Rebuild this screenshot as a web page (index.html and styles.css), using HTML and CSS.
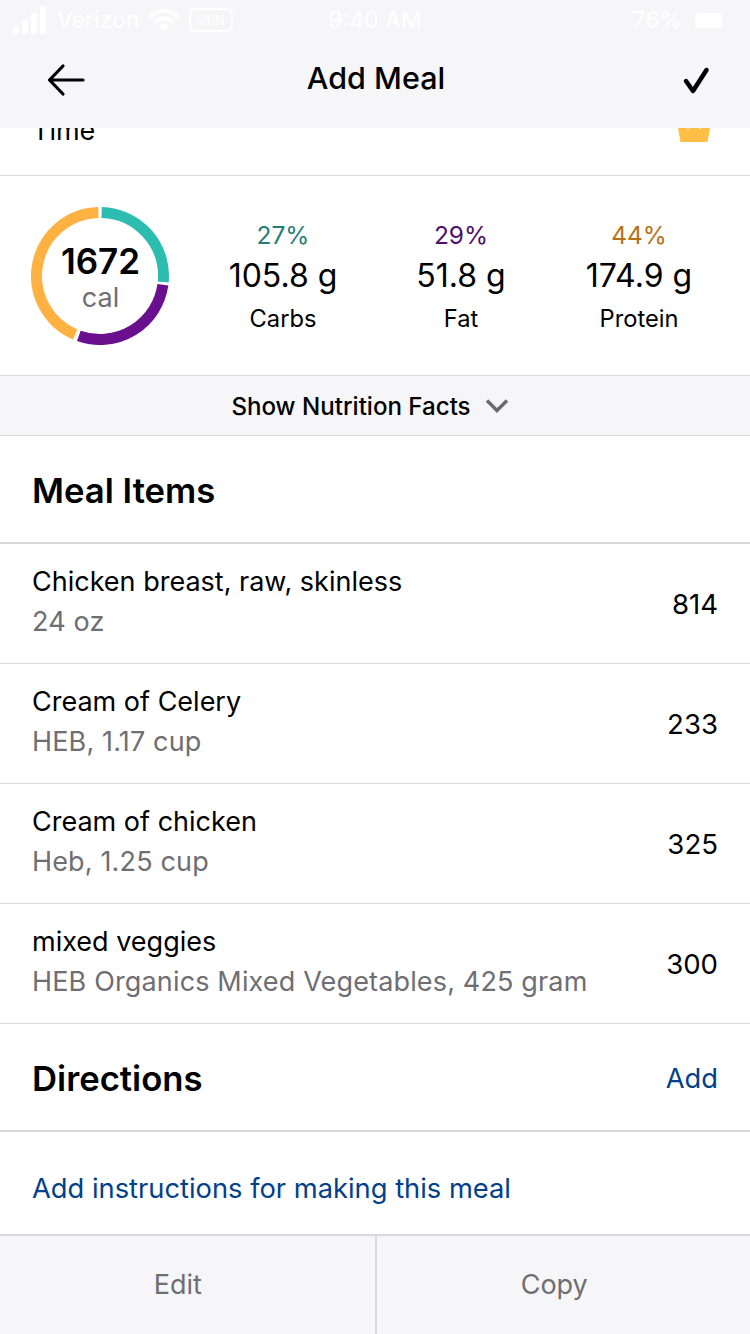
FILE: index.html
```html
<!DOCTYPE html>
<html lang="en">
<head>
    <meta charset="UTF-8">
    <meta name="viewport" content="width=device-width, initial-scale=1.0">
    <title>Add Meal</title>
    <link rel="stylesheet" href="styles.css">
</head>
<body>
    <div class="page">
        <header class="top">
            <div class="status">
                <div class="status-left">
                    <svg class="signal" width="34" height="32" viewBox="0 0 34 32">
                        <rect x="0" y="22" width="6" height="8" rx="2"/>
                        <rect x="9" y="16" width="6" height="14" rx="2"/>
                        <rect x="18" y="9" width="6" height="21" rx="2"/>
                        <rect x="27" y="2" width="6" height="28" rx="2"/>
                    </svg>
                    <span>Verizon</span>
                    <svg class="wifi" width="30" height="24" viewBox="0 0 30 24">
                        <path d="M1 9 C9 1 21 1 29 9 M6 14 C11 9 19 9 24 14" fill="none" stroke="#fff" stroke-width="4"/>
                        <path d="M10 18 C13 15 17 15 20 18 L15 23 Z" fill="#fff"/>
                    </svg>
                    <span class="vpn">VPN</span>
                </div>
                <span class="clock">9:40 AM</span>
                <div class="status-right">
                    <span>76%</span>
                    <span class="battery"></span>
                </div>
            </div>
            <nav class="nav">
                <svg class="nav-icon" width="40" height="40" viewBox="0 0 40 40">
                    <path d="M37 20 H4 M17 6 L3.500 20 L17 34" fill="none" stroke="#000" stroke-width="3.200" stroke-linecap="round" stroke-linejoin="round"/>
                </svg>
                <h1>Add Meal</h1>
                <svg class="nav-icon" width="40" height="40" viewBox="0 0 40 40">
                    <path d="M10 21 L17 31 L30.500 10" fill="none" stroke="#000" stroke-width="4.500" stroke-linecap="round" stroke-linejoin="round"/>
                </svg>
            </nav>
        </header>

        <div class="time-row">
            <span>Time</span>
            <svg width="32" height="14" viewBox="0 0 32 14">
                <path d="M0 0 H9 L10 1.500 L11 0 H21 L22 1.500 L23 0 H32 L29.500 14 H2.500 Z" fill="#ffbe45"/>
            </svg>
        </div>

        <section class="summary">
            <div class="ring">
                <svg width="140" height="140" viewBox="0 0 140 140" fill="none" stroke-width="11">
                    <path d="M71.660 6.520 A63.500 63.500 0 0 1 133.210 76.090" stroke="#2dbdb0"/>
                    <path d="M132.880 78.840 A63.500 63.500 0 0 1 48.800 129.860" stroke="#6a0f8e"/>
                    <path d="M45.190 128.450 A63.500 63.500 0 0 1 68.340 6.520" stroke="#ffb142"/>
                </svg>
                <div class="ring-text">
                    <strong>1672</strong>
                    <span>cal</span>
                </div>
            </div>
            <div class="macros">
                <div class="macro">
                    <span class="pct pct-carbs">27%</span>
                    <span class="grams">105.8 g</span>
                    <span class="macro-name">Carbs</span>
                </div>
                <div class="macro">
                    <span class="pct pct-fat">29%</span>
                    <span class="grams">51.8 g</span>
                    <span class="macro-name">Fat</span>
                </div>
                <div class="macro">
                    <span class="pct pct-protein">44%</span>
                    <span class="grams">174.9 g</span>
                    <span class="macro-name">Protein</span>
                </div>
            </div>
        </section>

        <div class="facts-toggle">
            <span>Show Nutrition Facts</span>
            <svg width="24" height="16" viewBox="0 0 24 16">
                <path d="M2 2.500 L12 12.500 L22 2.500" fill="none" stroke="#6b6b6f" stroke-width="3.500"/>
            </svg>
        </div>

        <div class="section-head">
            <h2>Meal Items</h2>
        </div>

        <div class="item">
            <div class="item-text">
                <span class="item-name">Chicken breast, raw, skinless</span>
                <span class="item-sub">24 oz</span>
            </div>
            <span class="item-cal">814</span>
        </div>
        <div class="item">
            <div class="item-text">
                <span class="item-name">Cream of Celery</span>
                <span class="item-sub">HEB, 1.17 cup</span>
            </div>
            <span class="item-cal">233</span>
        </div>
        <div class="item">
            <div class="item-text">
                <span class="item-name">Cream of chicken</span>
                <span class="item-sub">Heb, 1.25 cup</span>
            </div>
            <span class="item-cal">325</span>
        </div>
        <div class="item">
            <div class="item-text">
                <span class="item-name">mixed veggies</span>
                <span class="item-sub">HEB Organics Mixed Vegetables, 425 gram</span>
            </div>
            <span class="item-cal">300</span>
        </div>

        <div class="section-head">
            <h2>Directions</h2>
            <a class="link">Add</a>
        </div>

        <div class="instructions">
            <a class="link">Add instructions for making this meal</a>
        </div>

        <footer class="toolbar">
            <span class="tool">Edit</span>
            <span class="tool">Copy</span>
        </footer>
    </div>
</body>
</html>
```

FILE: styles.css
```css
* {
    box-sizing: border-box;
}

body {
    margin: 0;
    background: #fff;
    color: #000;
    font-family: Inter, "Liberation Sans", sans-serif;
}

.page {
    width: 750px;
    height: 1334px;
    display: flex;
    flex-direction: column;
    overflow: hidden;
}

h1, h2 {
    margin: 0;
    font-weight: 500;
}

.top {
    height: 128px;
    background: #f6f6f8;
}

.status {
    height: 40px;
    padding: 0 28px 0 13px;
    display: flex;
    align-items: center;
    justify-content: space-between;
    color: #fff;
    font-size: 23px;
}

.status-left, .status-right {
    display: flex;
    align-items: center;
    gap: 10px;
    width: 240px;
}

.status-right {
    justify-content: flex-end;
    width: 225px;
    gap: 13px;
}

.signal {
    fill: #fff;
}

.vpn {
    border: 2px solid #fff;
    border-radius: 6px;
    font-size: 13px;
    padding: 2px 6px;
}

.battery {
    width: 27px;
    height: 15px;
    background: #fff;
    border-radius: 3px;
}

.nav {
    height: 78px;
    padding: 2px 34px 0 46px;
    display: flex;
    align-items: center;
}

.nav h1 {
    flex: 1;
    margin-bottom: 5px;
    padding-right: 10px;
    text-align: center;
    font-size: 30.500px;
}

.time-row {
    height: 48px;
    padding: 0 40px 0 32px;
    border-bottom: 1px solid #d9d9d9;
    display: flex;
    justify-content: space-between;
    overflow: hidden;
    font-size: 27px;
    line-height: 28px;
}

.time-row span {
    margin-top: -11px;
}

.summary {
    height: 199px;
    padding-left: 30px;
    display: flex;
    align-items: center;
}

.ring {
    width: 140px;
    height: 140px;
    display: grid;
}

.ring svg, .ring-text {
    grid-area: 1 / 1;
}

.ring-text {
    padding: 4px 0 0 1px;
    display: flex;
    flex-direction: column;
    align-items: center;
    justify-content: center;
}

.ring-text strong {
    font-size: 35px;
    font-weight: 600;
    line-height: 40px;
}

.ring-text span {
    font-size: 27px;
    line-height: 34px;
    color: #6e6e73;
}

.macros {
    margin: 3px 0 0 24px;
    display: grid;
    grid-template-columns: repeat(3, 178px);
}

.macro {
    display: flex;
    flex-direction: column;
    align-items: center;
}

.pct {
    font-size: 24.500px;
    line-height: 30px;
}

.pct-carbs {
    color: #1f7f78;
}

.pct-fat {
    color: #4b0f70;
}

.pct-protein {
    color: #b87018;
}

.grams {
    font-size: 32px;
    line-height: 52px;
}

.macro-name {
    padding-top: 1px;
    font-size: 23.700px;
    line-height: 32px;
}

.facts-toggle {
    height: 61px;
    padding: 2px 10px 0 0;
    background: #f6f6f8;
    border-top: 1px solid #d9d9d9;
    border-bottom: 1px solid #d9d9d9;
    display: flex;
    align-items: center;
    justify-content: center;
    gap: 14px;
    font-size: 24.100px;
    font-weight: 500;
}

.facts-toggle svg {
    margin-bottom: 2px;
}

.section-head {
    height: 108px;
    padding: 2px 32px 0;
    border-bottom: 2px solid #d9d9d9;
    display: flex;
    align-items: center;
    justify-content: space-between;
}

.section-head h2 {
    font-size: 34.700px;
    font-weight: 600;
}

.item {
    height: 120px;
    padding: 0 32px;
    border-bottom: 1px solid #d9d9d9;
    display: flex;
    align-items: center;
    justify-content: space-between;
}

.item-text {
    padding-bottom: 4px;
    display: flex;
    flex-direction: column;
    gap: 8px;
}

.item-name, .item-sub, .item-cal {
    font-size: 27px;
    line-height: 32px;
}

.item-sub {
    color: #6e6e73;
    letter-spacing: 0.150px;
}

.item-cal {
    font-size: 27.600px;
}

.link {
    color: #00418a;
    font-size: 27.300px;
}

.instructions {
    height: 102px;
    padding: 10px 32px 0;
    display: flex;
    align-items: center;
}

.toolbar {
    flex: 1;
    background: #f6f6f8;
    border-top: 2px solid #d9d9d9;
    display: flex;
}

.tool {
    flex: 1;
    padding: 0 18px 2px 0;
    display: flex;
    align-items: center;
    justify-content: center;
    color: #6e6e73;
    font-size: 27px;
}

.tool + .tool {
    margin-left: 1px;
    border-left: 2px solid #d9d9d9;
}
```
